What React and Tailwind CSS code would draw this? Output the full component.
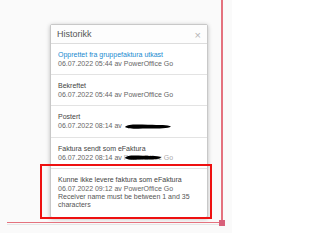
import React from "react";

const rows = [
  { title: "Opprettet fra gruppefaktura utkast", link: true, by: "PowerOffice Go", date: "06.07.2022 05:44" },
  { title: "Bekreftet", by: "PowerOffice Go", date: "06.07.2022 05:44" },
  { title: "Postert", by: null, date: "06.07.2022 08:14" },
  { title: "Faktura sendt som eFaktura", by: "partial", date: "06.07.2022 08:14" },
];

function Redact({ partial }) {
  return (
    <span className="relative inline-block align-middle w-[50px] h-[9px]">
      {partial && <span className="absolute left-0 top-0 text-[#aaa]">PowerOffice Go</span>}
      <svg className="absolute left-0 top-[1px]" width={partial ? 38 : 48} height="7" viewBox="0 0 48 7" preserveAspectRatio="none">
        <path d="M1 4 C4 1 12 1.5 24 1.8 C36 2 44 2 47 3.5 C44 5.5 36 5.5 24 5.6 C12 5.8 4 6 1 4 Z" fill="#000" />
      </svg>
    </span>
  );
}

export default function App() {
  return (
    <div className="relative w-[232px] h-[233px] overflow-hidden bg-[#fafafa]" style={{ fontFamily: '"Liberation Sans", Arial, sans-serif' }}>
      <div className="pl-[50px] pt-[24px]">
        <div className="w-[158px] bg-white border border-[#c8c8c8] rounded-[2px] shadow-[0_1px_4px_rgba(0,0,0,0.25)]">
          <div className="h-[19px] flex items-center justify-between pl-[6px] pr-[6px] border-b border-[#dddddd] bg-[#fdfdfd]">
            <span className="text-[9px] leading-[9px] text-[#555]">Historikk</span>
            <span className="text-[11px] leading-[9px] text-[#b5b5b5] mt-[3px]">×</span>
          </div>
          {rows.map((r, i) => (
            <div key={i} className="px-[7px] pt-[6px] pb-[6px] border-b border-[#e3e3e3] text-[7px] leading-[9px]">
              <div className={r.link ? "text-[#1a8ad0]" : "text-[#444]"}>{r.title}</div>
              <div className="text-[#666] whitespace-nowrap">
                {r.date} av{" "}
                {r.by === null ? <Redact /> : r.by === "partial" ? <Redact partial /> : r.by}
              </div>
            </div>
          ))}
          <div className="px-[7px] pt-[6px] pb-[8px] text-[7px] leading-[9px]">
            <div className="text-[#444]">Kunne ikke levere faktura som eFaktura</div>
            <div className="text-[#666]">06.07.2022 09:12 av PowerOffice Go</div>
            <div className="text-[#555] leading-[8px]">Receiver name must be between 1 and 35 characters</div>
          </div>
        </div>
      </div>
      {/* annotation overlays */}
      <div className="absolute left-[40px] top-[164px] w-[172px] h-[55px] border-2 border-[#ee1111]" />
      <div className="absolute left-[221px] top-0 w-[2px] h-[223px] bg-[#e4727e]" />
      <div className="absolute left-[7px] top-[222px] w-[215px] h-[1px] bg-[#e4727e]" />
      <div className="absolute left-[7px] top-[224px] w-[215px] h-[1px] bg-[#e6e6e6]" />
      <div className="absolute left-[219px] top-[220px] w-[6px] h-[6px] bg-[#d8607a]" />
    </div>
  );
}
